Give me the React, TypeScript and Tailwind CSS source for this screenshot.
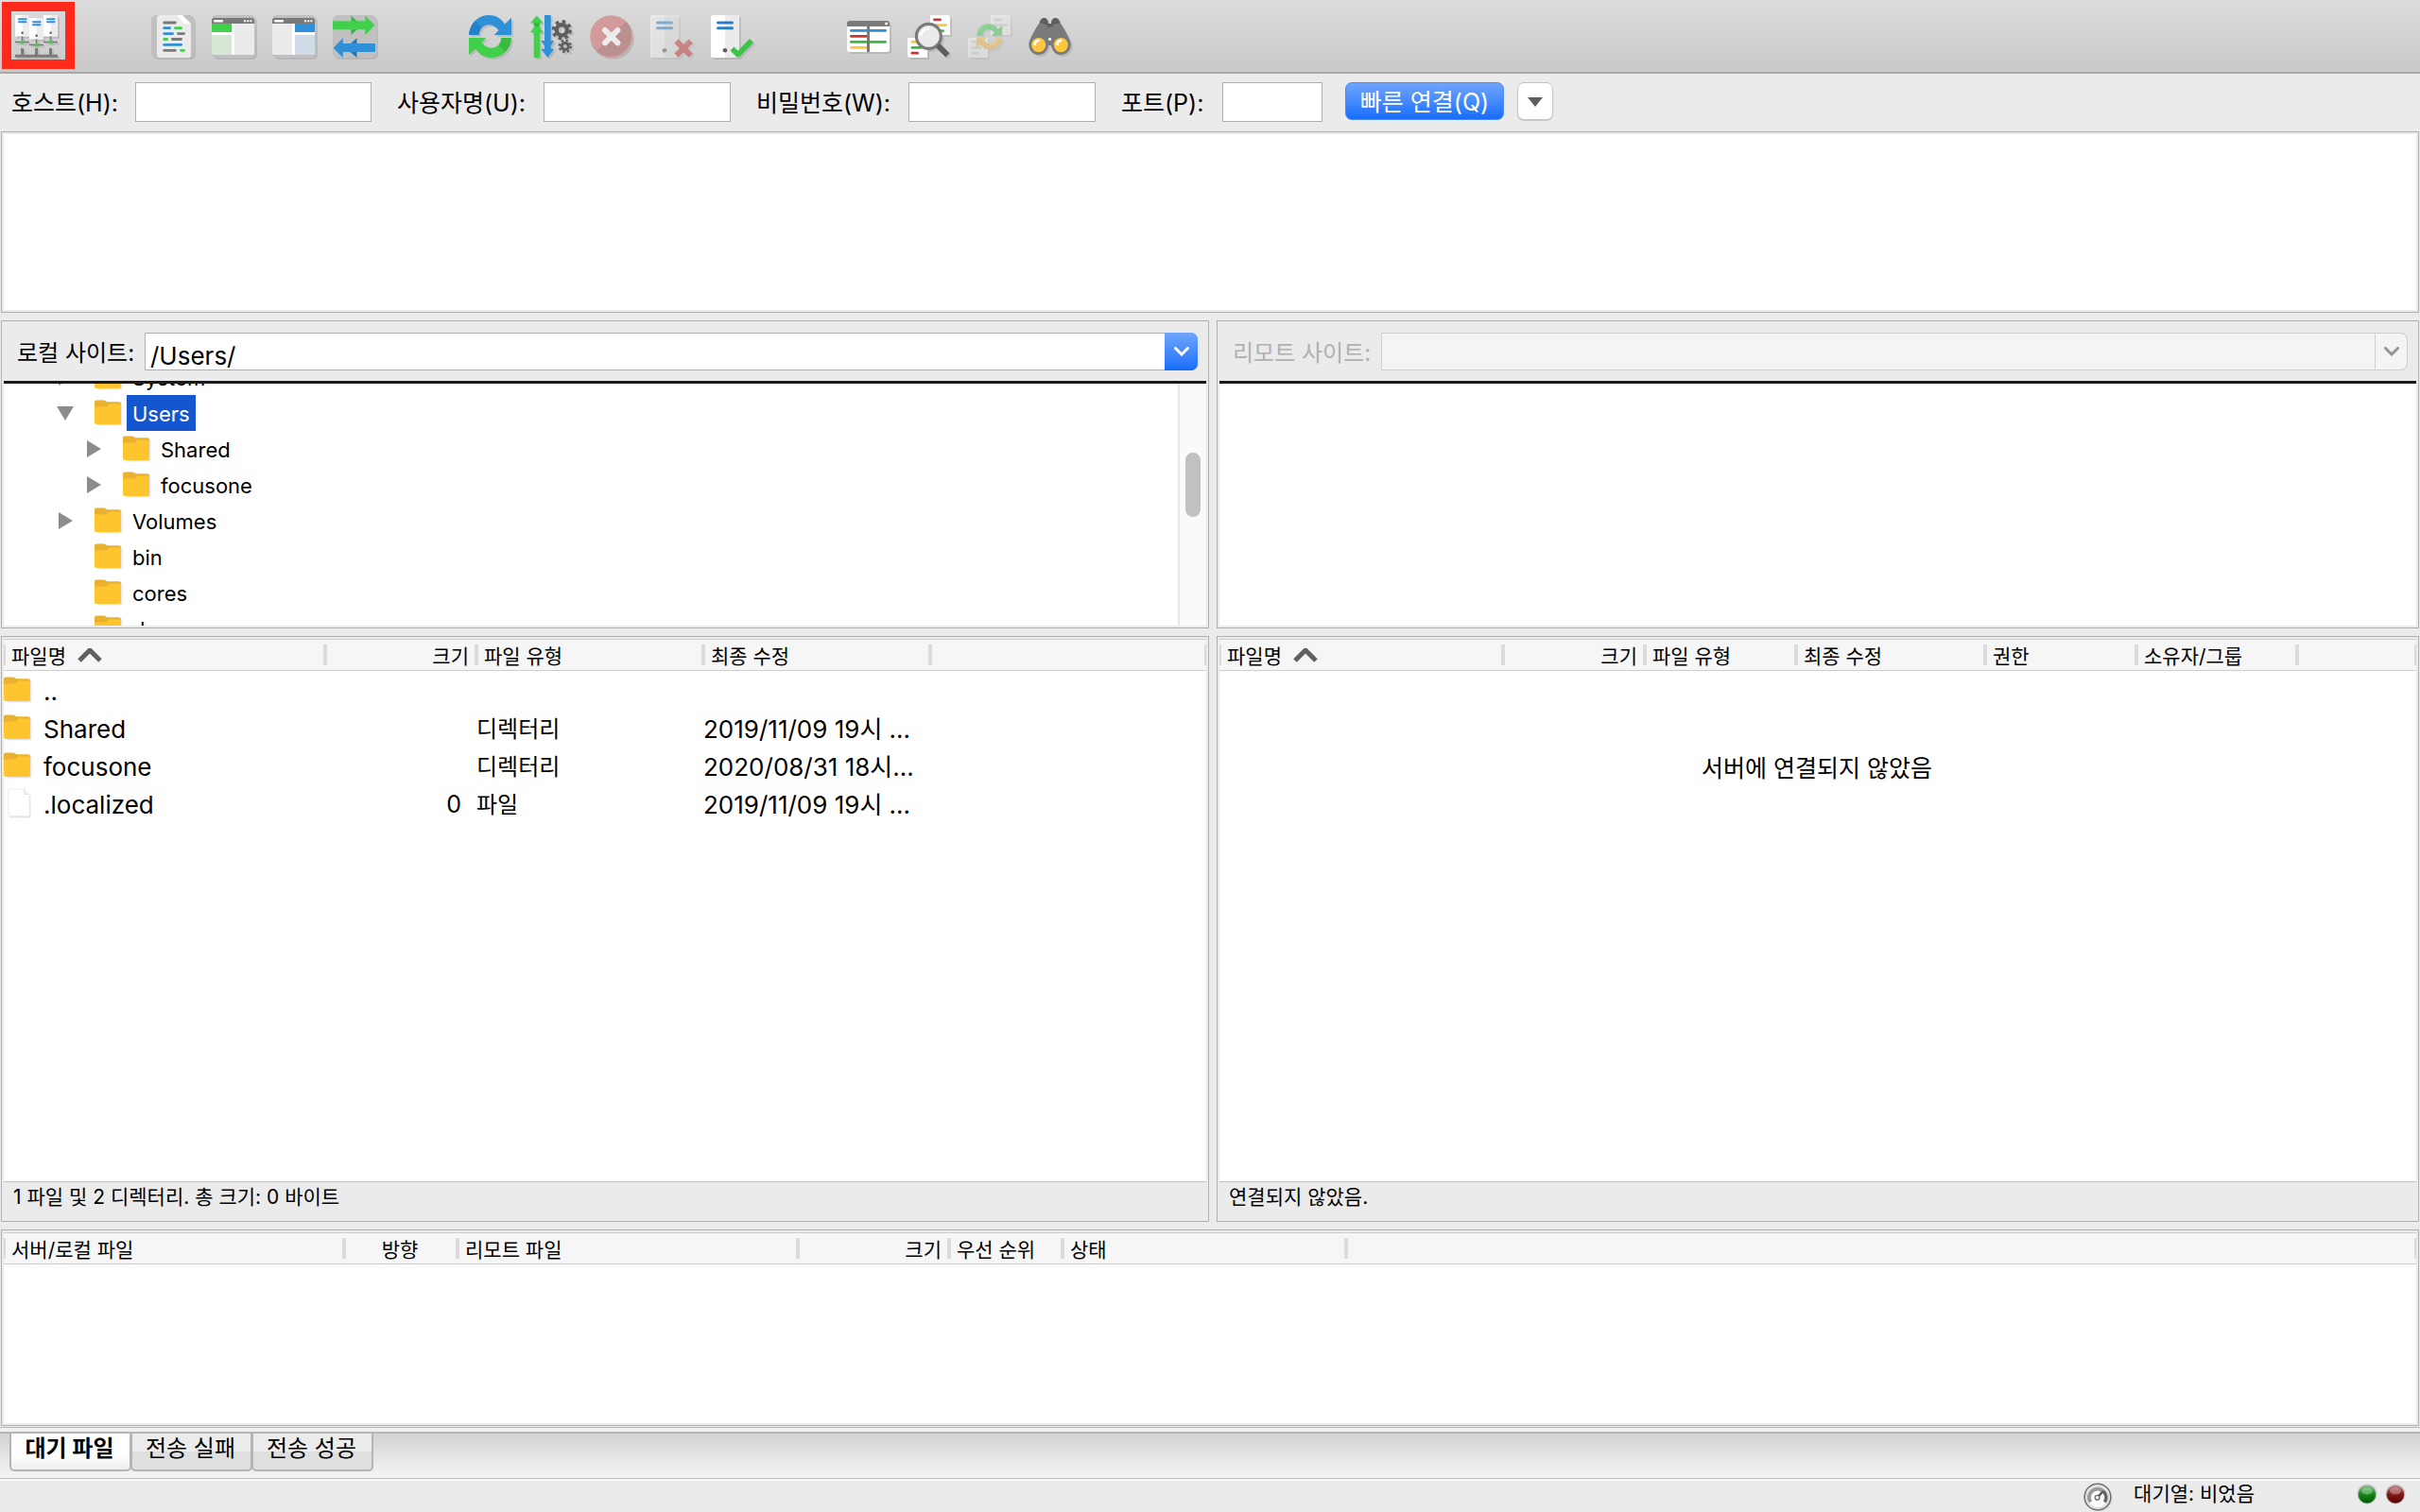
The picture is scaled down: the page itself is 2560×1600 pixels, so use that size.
import { useState } from "react";
import type { ReactNode } from "react";

const BLUE = "#2f90d8";
const GREEN = "#41d04c";
const GRAY = "#7a7a7a";
const RED = "#cb3436";
const YELLOW = "#fec63d";

type Line = [x1: number, x2: number, y: number, color: string];

function Lines({ items, width = 2.8 }: { items: Line[]; width?: number }) {
  return (
    <g strokeWidth={width} strokeLinecap="round">
      {items.map(([x1, x2, y, color], i) => (
        <path key={i} d={`M${x1 + width / 2} ${y}H${x2 - width / 2}`} stroke={color} />
      ))}
    </g>
  );
}

function Icon({ children }: { children: ReactNode }) {
  return (
    <svg
      viewBox="0 0 48 48"
      className="size-12 overflow-visible drop-shadow-[2px_2px_0_rgba(0,0,0,0.1)]"
      fill="none"
      aria-hidden="true"
    >
      {children}
    </svg>
  );
}

function SiteManagerIcon() {
  const servers = [
    [0, 0],
    [15, 3],
    [30, 0],
  ];
  return (
    <Icon>
      {servers.map(([x, y]) => (
        <g key={x} transform={`translate(${x} ${y})`}>
          <path d="M0 0H15V22.5H0Z" fill="#fff" />
          <path d="M7.5 0H15V22.5H7.5Z" fill="#ececec" />
          <Lines width={2} items={[[3, 12.5, 4.3, BLUE], [3, 12.5, 7.3, BLUE]]} />
          <circle cx="7.6" cy="18.8" r="1.2" fill="#555" />
          <path d="M7.6 22.5V28.4M0 28.4H15" stroke="#777" strokeWidth="1.5" />
          <circle cx="7.6" cy="28.4" r="2" fill={GREEN} />
        </g>
      ))}
      <path d="M7.6 35V43M22.5 35V43M37.5 35V43M0 43.3H45" stroke={GRAY} strokeWidth="3" />
    </Icon>
  );
}

function LogIcon() {
  return (
    <Icon>
      <rect width="45" height="45" rx="5" fill="#c0c0c0" />
      <path d="M9 0H33L42 9V42a3 3 0 0 1-3 3H9a3 3 0 0 1-3-3V3a3 3 0 0 1 3-3Z" fill="#ebebeb" />
      <path d="M33 0H40a5 5 0 0 1 5 5V12H42V9Z" fill="#c0c0c0" />
      <path d="M27 0L33 0L42 9H35a2 2 0 0 1-2-2Z" fill="#fff" />
      <Lines
        items={[
          [12.3, 26.7, 8, GRAY],
          [12.3, 21, 13.7, BLUE],
          [24, 33, 13.7, GREEN],
          [12.3, 24, 19.6, BLUE],
          [27, 36, 19.6, GRAY],
          [12.3, 18, 25.5, GREEN],
          [21, 33, 25.5, GRAY],
          [12.3, 33, 31.3, BLUE],
          [12.3, 26.7, 37.3, GRAY],
          [30, 36, 37.3, GREEN],
        ]}
      />
    </Icon>
  );
}

function LocalPaneIcon() {
  return (
    <Icon>
      <rect width="46" height="45" rx="5" fill="#c0c0c0" />
      <path d="M0 9H45V39a3 3 0 0 1-3 3H3a3 3 0 0 1-3-3Z" fill="#fff" />
      <path d="M0 9V6a3 3 0 0 1 3-3H42a3 3 0 0 1 3 3V9Z" fill={GRAY} />
      <path d="M0 9H21V18H0Z" fill={GREEN} />
      <path d="M0 21H21V42H3a3 3 0 0 1-3-3Z" fill="#d5e8d6" />
      <path d="M24 9H45V39a3 3 0 0 1-3 3H24Z" fill="#ebebeb" />
      <Lines width={2.4} items={[[2, 12, 6.3, "#fff"]]} />
      <path d="M34 6.3h2M37.2 6.3h2M40.4 6.3h2" stroke="#fff" strokeWidth="2" />
    </Icon>
  );
}

function RemotePaneIcon() {
  return (
    <Icon>
      <rect width="46" height="45" rx="5" fill="#c0c0c0" />
      <path d="M0 9H45V39a3 3 0 0 1-3 3H3a3 3 0 0 1-3-3Z" fill="#fff" />
      <path d="M0 9V6a3 3 0 0 1 3-3H42a3 3 0 0 1 3 3V9Z" fill={GRAY} />
      <path d="M24 9H45V18H24Z" fill={BLUE} />
      <path d="M24 21H45V39a3 3 0 0 1-3 3H24Z" fill="#cfdce7" />
      <path d="M0 9H21V42H3a3 3 0 0 1-3-3Z" fill="#ebebeb" />
      <Lines width={2.4} items={[[2, 12, 6.3, "#fff"]]} />
      <path d="M34 6.3h2M37.2 6.3h2M40.4 6.3h2" stroke="#fff" strokeWidth="2" />
    </Icon>
  );
}

function QueueIcon() {
  return (
    <Icon>
      <rect width="46" height="45" rx="5" fill="#c0c0c0" />
      <path d="M19.5 .6L26 7V15L19.5 21Z" fill="#34b440" />
      <path d="M0 6.3H34.3V.6L44.6 10.7L34.3 21V15.3H0Z" fill={GREEN} />
      <path d="M25.5 24.2L19 30V39.5L25.5 45Z" fill="#2378ba" />
      <path d="M45 30H10.8V24.2L.6 34.7L10.8 45V39H45Z" fill={BLUE} />
    </Icon>
  );
}

const REFRESH_ARROW =
  "M.2 21C.5 9 9.5 0 21 0C28 0 34 3 38 9.5L45 2.7V21H26.7L31.5 16C28.5 12 24.5 10 20.5 10.3C15 10.7 11.2 15 10.7 21Z";
const REFRESH_SHADE = "M.2 21C.3 15 3 9.5 6.8 6L13.2 13.2C11.6 15.2 10.8 18 10.7 21Z";

function RefreshIcon() {
  return (
    <Icon>
      <path d={REFRESH_ARROW} fill={BLUE} />
      <path d={REFRESH_SHADE} fill="#2680c6" />
      <g transform="rotate(180 22.5 22.5)">
        <path d={REFRESH_ARROW} fill={GREEN} />
        <path d={REFRESH_SHADE} fill="#38bb43" />
      </g>
    </Icon>
  );
}

function ProcessIcon() {
  return (
    <Icon>
      <path d="M7.8 .6L14.7 8.4H11V13L14.7 18.4H11V45H4.7V18.4H1L4.7 13V8.4H1Z" fill={GREEN} />
      <path d="M4.7 8.4H11V10L7.8 12.5L4.7 10Z" fill="#34b440" />
      <path d="M16 0H22.7V27H26.3L22.7 32.5V35.7H26.3L19.3 45L12.3 35.7H16V32.5L12.3 27H16Z" fill={BLUE} />
      <g stroke="#5e5e5e">
        <circle cx="34.3" cy="15.8" r="5.6" strokeWidth="4.4" />
        <circle cx="34.3" cy="15.8" r="9" strokeWidth="3.4" strokeDasharray="3.6 3.47" />
        <circle cx="37.8" cy="33" r="3.6" strokeWidth="3" />
        <circle cx="37.8" cy="33" r="6" strokeWidth="2.4" strokeDasharray="2.4 2.31" />
      </g>
    </Icon>
  );
}

function CancelIcon() {
  return (
    <Icon>
      <circle cx="22.6" cy="22.6" r="22.4" fill="#d29a9a" />
      <path d="M38.4 6.8A22.4 22.4 0 0 1 6.8 38.4Z" fill="#bd9090" />
      <path d="M16 16L29.4 29.4M29.4 16L16 29.4" stroke="#ececec" strokeWidth="6" strokeLinecap="round" />
    </Icon>
  );
}

function Tower() {
  return (
    <>
      <path d="M2 0H28a2 2 0 0 1 2 2V43a2 2 0 0 1-2 2H2a2 2 0 0 1-2-2V2a2 2 0 0 1 2-2Z" fill="#fff" />
      <path d="M15 0H28a2 2 0 0 1 2 2V43a2 2 0 0 1-2 2H15Z" fill="#ebebeb" />
      <Lines width={3} items={[[6, 24, 8, "#2a80c4"], [6, 24, 13.8, "#2a80c4"]]} />
      <circle cx="15" cy="37.2" r="2.3" fill="#5e5e5e" />
    </>
  );
}

function DisconnectIcon() {
  return (
    <Icon>
      <g opacity="0.45">
        <Tower />
        <path d="M27.5 27.5L42.8 42.6M42.8 27.5L27.5 42.6" stroke={RED} strokeWidth="6" />
      </g>
    </Icon>
  );
}

function ReconnectIcon() {
  return (
    <Icon>
      <Tower />
      <path d="M22.5 35.5L28.7 41.8L43 27" stroke="#3bc347" strokeWidth="5.6" strokeLinejoin="round" />
    </Icon>
  );
}

function FilterIcon() {
  return (
    <Icon>
      <path d="M0 12H45V36a3 3 0 0 1-3 3H3a3 3 0 0 1-3-3Z" fill="#fff" />
      <path d="M0 12V9a3 3 0 0 1 3-3H42a3 3 0 0 1 3 3V12Z" fill={GRAY} />
      <Lines
        items={[
          [3, 42, 16.4, BLUE],
          [3, 22, 22.3, RED],
          [3, 42, 28.4, "#38bb43"],
          [3, 22, 34.3, YELLOW],
        ]}
      />
      <path d="M22.5 12V39" stroke={GRAY} strokeWidth="3" />
      <circle cx="41.6" cy="9" r="1.5" fill="#fff" />
    </Icon>
  );
}

function CompareIcon() {
  return (
    <Icon>
      <path d="M24 0H42a3 3 0 0 1 3 3V21H24Z" fill="#fff" />
      <path d="M0 24H21V45H3a3 3 0 0 1-3-3Z" fill="#fff" />
      <Lines
        items={[
          [27, 36, 4.8, RED],
          [27, 42, 10.6, YELLOW],
          [27, 39, 16.7, "#38bb43"],
          [3.5, 16, 28.4, YELLOW],
          [3.5, 16, 34.3, "#38bb43"],
          [3.5, 12, 40.2, RED],
        ]}
      />
      <circle cx="22.4" cy="22.4" r="13" fill="#ebebeb" stroke={GRAY} strokeWidth="3.2" />
      <path d="M14 21.5A9 9 0 0 1 22 14.5" stroke="#fff" strokeWidth="2.6" strokeLinecap="round" />
      <path d="M32.2 32.2L42.4 42.4" stroke="#5e5e5e" strokeWidth="6" />
    </Icon>
  );
}

function SyncIcon() {
  return (
    <Icon>
      <g opacity="0.5">
        <path d="M24 0H42a3 3 0 0 1 3 3V21H24Z" fill="#f4f4f4" />
        <path d="M0 24H21V45H3a3 3 0 0 1-3-3Z" fill="#f4f4f4" />
        <Lines
          items={[
            [27, 36, 4.8, "#d5d5d5"],
            [27, 42, 10.6, "#d5d5d5"],
            [3.5, 13, 28.4, "#d5d5d5"],
            [3.5, 15, 34.3, "#d5d5d5"],
            [3.5, 12, 40.2, "#d5d5d5"],
          ]}
        />
        <g transform="translate(8.8 9) scale(.61)">
          <path d={REFRESH_ARROW} fill="#4fd25e" />
          <path d={REFRESH_ARROW} fill="#f5c05a" transform="rotate(180 22.5 22.5)" />
        </g>
      </g>
    </Icon>
  );
}

function FindIcon() {
  return (
    <Icon>
      <path d="M11.5 8.5C12 5 14 3 16.5 3S21 5 21 9H24C24 5 26 3 28.5 3S33 5 33.5 8.5L30 14H15Z" fill="#5e5e5e" />
      <path
        d="M11.5 8.5C15 8 19 9.5 20.5 13H24.5C26 9.5 30 8 33.5 8.5C37 13 41 20 44 27.5C46.5 34 42 42 34.5 42C28.5 42 25 38 24 32H21C20 38 16.5 42 10.5 42C3 42-1.5 34 1 27.5C4 20 8 13 11.5 8.5Z"
        fill={GRAY}
      />
      <circle cx="10.7" cy="31.6" r="7.6" fill={YELLOW} />
      <circle cx="34.3" cy="31.6" r="7.6" fill={YELLOW} />
      <path
        d="M6.5 31A4.5 4.5 0 0 1 10.5 27M30.2 31A4.5 4.5 0 0 1 34.2 27"
        stroke="#fff"
        strokeWidth="2.6"
        strokeLinecap="round"
      />
      <circle cx="22.5" cy="25.4" r="1.6" fill="#fff" />
    </Icon>
  );
}

function FolderIcon() {
  return (
    <svg viewBox="0 0 30 28" className="h-7 w-[30px] shrink-0" aria-hidden="true">
      <path d="M2 3.5H28L29.5 5V25.5a2 2 0 0 1-2 2H4Z" fill="#e8e8e8" />
      <path d="M0 2a2 2 0 0 1 2-1.5H10.5L13.5 2.3H26a2 2 0 0 1 2 2V10H0Z" fill="#e8b12f" />
      <path d="M0 7.6H12L16 4.5H26.5a1.5 1.5 0 0 1 1.5 1.5V24a2 2 0 0 1-2 2H2a2 2 0 0 1-2-2Z" fill="#fec52e" />
    </svg>
  );
}

function FileIcon() {
  return (
    <svg viewBox="0 0 30 32" className="h-8 w-[30px] shrink-0" aria-hidden="true">
      <path d="M6 2H22L28.5 8.5V29.5a2 2 0 0 1-2 2H7a2 2 0 0 1-2-2V3a1 1 0 0 1 1-1Z" fill="#e6e6e6" />
      <path
        d="M6 1H21.5L27 7V28a1.5 1.5 0 0 1-1.5 1.5H6.5A1.5 1.5 0 0 1 5 28V2a1 1 0 0 1 1-1Z"
        fill="#fff"
        stroke="#ececec"
      />
      <path d="M21.5 1V6.5H27" fill="#f2f2f2" stroke="#e2e2e2" />
    </svg>
  );
}

const toolGroups = [
  [
    { label: "로그 표시", icon: <LogIcon /> },
    { label: "로컬 트리 표시", icon: <LocalPaneIcon /> },
    { label: "리모트 트리 표시", icon: <RemotePaneIcon /> },
    { label: "전송 대기열 표시", icon: <QueueIcon /> },
  ],
  [
    { label: "새로 고침", icon: <RefreshIcon /> },
    { label: "대기열 처리", icon: <ProcessIcon /> },
    { label: "취소", icon: <CancelIcon />, disabled: true },
    { label: "연결 끊기", icon: <DisconnectIcon />, disabled: true },
    { label: "재연결", icon: <ReconnectIcon /> },
  ],
  [
    { label: "필터", icon: <FilterIcon /> },
    { label: "디렉터리 비교", icon: <CompareIcon /> },
    { label: "동기화 탐색", icon: <SyncIcon />, disabled: true },
    { label: "파일 검색", icon: <FindIcon /> },
  ],
];

function Toolbar() {
  return (
    <div
      role="toolbar"
      className="flex gap-24 border-b-2 border-[#a8a8a8] bg-linear-to-b from-[#dcdcdc] to-[#c9c9c9] px-4 pt-4 pb-3"
    >
      <button type="button" aria-label="사이트 관리자" className="relative">
        <SiteManagerIcon />
        <span className="absolute -top-[14px] -right-[15px] -bottom-[9px] -left-[14px] border-10 border-[#ff2a1c]" />
      </button>
      {toolGroups.map((group, i) => (
        <div key={i} className="flex gap-4">
          {group.map((t) => (
            <button key={t.label} type="button" aria-label={t.label} disabled={"disabled" in t}>
              {t.icon}
            </button>
          ))}
        </div>
      ))}
    </div>
  );
}

const fields = [
  { id: "host", label: "호스트(H):", type: "text", labelWidth: "w-[131px]", width: "w-[250px]" },
  { id: "user", label: "사용자명(U):", type: "text", labelWidth: "w-[155px]", width: "w-[198px]" },
  { id: "pass", label: "비밀번호(W):", type: "password", labelWidth: "w-[161px]", width: "w-[198px]" },
  { id: "port", label: "포트(P):", type: "text", labelWidth: "w-[107px]", width: "w-[106px]" },
];

function QuickConnect() {
  return (
    <form className="flex items-start gap-6 px-3 pt-[9px] pb-[10px]" onSubmit={(e) => e.preventDefault()}>
      <div className="flex gap-[27px]">
        {fields.map((f) => (
          <div key={f.id} className="flex h-[42px] items-center">
            <label htmlFor={f.id} className={`${f.labelWidth} pt-[2px] whitespace-nowrap`}>
              {f.label}
            </label>
            <input
              id={f.id}
              type={f.type}
              className={`${f.width} h-[42px] border border-[#b0b0b0] bg-white px-1 outline-none`}
            />
          </div>
        ))}
      </div>
      <div className="flex gap-[14px]">
        <button
          type="submit"
          className="h-10 w-[168px] rounded-[7px] border border-[#4a8cf5] bg-linear-to-b from-[#6ea5f9] to-[#146cfd] pt-[2px] whitespace-nowrap text-white"
        >
          빠른 연결(Q)
        </button>
        <button
          type="button"
          aria-label="최근 서버"
          className="flex h-10 w-[38px] items-center justify-center rounded-[7px] border border-[#c4c4c4] bg-white pt-[2px] shadow-[0_1px_1px_rgba(0,0,0,0.15)]"
        >
          <svg viewBox="0 0 16 10" className="h-[10px] w-4" aria-hidden="true">
            <path d="M0 0H16L8 10Z" fill="#5e5e5e" />
          </svg>
        </button>
      </div>
    </form>
  );
}

function Panel({ className, children }: { className: string; children?: ReactNode }) {
  return <section className={`flex flex-col border border-[#b0b0b0] ${className}`}>{children}</section>;
}

function SiteSelect({ id, path, disabled }: { id: string; path: string; disabled?: boolean }) {
  return (
    <div className="relative flex flex-1">
      <select
        id={id}
        disabled={disabled}
        className={`h-10 flex-1 appearance-none rounded-r-[7px] border px-[5px] pt-[10px] text-[26px] leading-none opacity-100 outline-none ${
          disabled ? "border-[#d0d0d0] bg-[#f4f4f4]" : "border-[#b0b0b0] bg-white"
        }`}
      >
        <option>{path}</option>
      </select>
      <span
        className={`pointer-events-none absolute inset-y-0 right-0 flex w-[35px] items-center justify-center rounded-r-[7px] ${
          disabled ? "border border-[#d0d0d0] text-[#959595]" : "bg-linear-to-b from-[#6ea5f9] to-[#146cfd] text-white"
        }`}
      >
        <svg viewBox="0 0 16 10" className="h-[10px] w-4" fill="none" aria-hidden="true">
          <path d="M1.5 1.5L8 8L14.5 1.5" stroke="currentColor" strokeWidth="3" strokeLinecap="round" />
        </svg>
      </span>
    </div>
  );
}

const tree = [
  { name: "System", indent: "pl-[56px]", arrow: "right" },
  { name: "Users", indent: "pl-[56px]", arrow: "down", selected: true },
  { name: "Shared", indent: "pl-[86px]", arrow: "right" },
  { name: "focusone", indent: "pl-[86px]", arrow: "right" },
  { name: "Volumes", indent: "pl-[56px]", arrow: "right" },
  { name: "bin", indent: "pl-[56px]", arrow: "" },
  { name: "cores", indent: "pl-[56px]", arrow: "" },
  { name: "dev", indent: "pl-[56px]", arrow: "" },
];

function LocalTree() {
  return (
    <div className="mx-[2px] mb-[2px] flex flex-1 overflow-hidden border-t-3 border-[#1a1a1a] bg-white">
      {/* list is scrolled past the first rows */}
      <ul role="tree" className="-mt-[26px] h-[282px] flex-1 text-[22px]">
        {tree.map((n) => (
          <li key={n.name} role="treeitem" aria-selected={!!n.selected} className={`flex h-[38px] items-center ${n.indent}`}>
            <svg viewBox="0 0 18 18" className="mr-[22px] size-[18px]" fill="#8c8c8c" aria-hidden="true">
              {n.arrow === "right" && <path d="M2 0L17 9L2 18Z" />}
              {n.arrow === "down" && <path d="M0 2H18L9 17Z" />}
            </svg>
            <FolderIcon />
            <span
              className={`ml-1 flex h-[38px] items-center px-[6px] pt-[2px] ${n.selected ? "bg-[#1456cf] text-white" : ""}`}
            >
              {n.name}
            </span>
          </li>
        ))}
      </ul>
      <div className="flex h-64 w-[30px] justify-center border-l-2 border-l-[#e6e6e6] bg-[#fafafa]">
        <span className="mt-[73px] h-[68px] w-4 rounded-full bg-[#c1c1c1]" />
      </div>
    </div>
  );
}

type Column = { label: string; width?: string; align?: "right" | "center"; sorted?: boolean };

const localColumns: Column[] = [
  { label: "파일명", width: "w-[340px]", sorted: true },
  { label: "크기", width: "w-[160px]", align: "right" },
  { label: "파일 유형", width: "w-[240px]" },
  { label: "최종 수정", width: "w-[240px]" },
  { label: "" },
];

const remoteColumns: Column[] = [
  { label: "파일명", width: "w-[300px]", sorted: true },
  { label: "크기", width: "w-[150px]", align: "right" },
  { label: "파일 유형", width: "w-[160px]" },
  { label: "최종 수정", width: "w-[200px]" },
  { label: "권한", width: "w-[160px]" },
  { label: "소유자/그룹", width: "w-[170px]" },
  { label: "" },
];

const queueColumns: Column[] = [
  { label: "서버/로컬 파일", width: "w-[360px]" },
  { label: "방향", width: "w-[120px]", align: "center" },
  { label: "리모트 파일", width: "w-[360px]" },
  { label: "크기", width: "w-[160px]", align: "right" },
  { label: "우선 순위", width: "w-[120px]" },
  { label: "상태", width: "w-[300px]" },
  { label: "" },
];

function ListTable({ columns, children }: { columns: Column[]; children?: ReactNode }) {
  return (
    <table className="w-full table-fixed border-collapse">
      <thead className="bg-[#f6f6f6] text-[21px]">
        <tr>
          {columns.map((c, i) => (
            <th key={i} className={`border-y border-[#cdcdcd] p-0 text-left font-normal ${c.width ?? ""}`}>
              <div className="flex h-8 items-center">
                {i === 0 && <span className="h-[22px] w-[2px] bg-[#dcdcdc]" />}
                <span
                  className={`flex flex-1 items-center gap-3 pt-[2px] whitespace-nowrap ${i === 0 ? "pl-[6px]" : "pl-2"} ${
                    c.align === "right" ? "justify-end pr-[6px]" : ""
                  } ${c.align === "center" ? "justify-center pr-2" : ""}`}
                >
                  {c.label}
                  {c.sorted && (
                    <svg viewBox="0 0 26 16" className="h-4 w-[26px]" fill="none" aria-label="오름차순">
                      <path d="M2 13L13 2L24 13" stroke="#606060" strokeWidth="5" />
                    </svg>
                  )}
                </span>
                <span
                  className={`h-[22px] bg-[#dcdcdc] ${i === columns.length - 1 ? "w-[2px]" : "relative -mr-[2px] w-1"}`}
                />
              </div>
            </th>
          ))}
        </tr>
      </thead>
      <tbody>{children}</tbody>
    </table>
  );
}

const files = [
  { name: "..", size: "", type: "", modified: "", folder: true },
  { name: "Shared", size: "", type: "디렉터리", modified: "2019/11/09 19시 ...", folder: true },
  { name: "focusone", size: "", type: "디렉터리", modified: "2020/08/31 18시...", folder: true },
  { name: ".localized", size: "0", type: "파일", modified: "2019/11/09 19시 ...", folder: false },
];

function StatusLine({ children }: { children: ReactNode }) {
  return (
    <p className="mx-[2px] h-[42px] border-t border-[#bdbdbd] px-[10px] text-[21px] leading-8">{children}</p>
  );
}

const tabs = ["대기 파일", "전송 실패", "전송 성공"];

function QueueTabs() {
  const [active, setActive] = useState(0);
  return (
    <div className="mt-px border-t border-[#b8b8b8]">
      <div className="h-[6px] border-b-2 border-[#b5b5b5] bg-[#f0f0f0]" />
      <div
        role="tablist"
        className="flex h-[48px] items-start border-b border-[#bdbdbd] bg-linear-to-b from-[#d3d3d3] to-[#f5f5f5] pl-[10px]"
      >
        {tabs.map((t, i) => (
          <button
            key={t}
            type="button"
            role="tab"
            aria-selected={i === active}
            onClick={() => setActive(i)}
            className={`-mr-px flex h-10 w-[129px] justify-center rounded-b-[5px] border-2 border-t-0 border-[#b5b5b5] pt-px pr-[2px] text-[24px] leading-[30px] whitespace-nowrap ${
              i === active
                ? "bg-linear-to-b from-white from-60% to-[#eeeeee] font-bold"
                : "bg-linear-to-b from-[#ececec] from-50% to-[#dfdfdf] to-50%"
            }`}
          >
            {t}
          </button>
        ))}
      </div>
    </div>
  );
}

function Led({ on }: { on: boolean }) {
  return (
    <svg viewBox="0 0 22 22" className="size-[22px]" aria-hidden="true">
      <defs>
        <linearGradient id={on ? "led-on" : "led-off"} x2="0" y2="1">
          <stop stopColor={on ? "#63b863" : "#b56464"} />
          <stop offset="0.5" stopColor={on ? "#148414" : "#831717"} />
          <stop offset="1" stopColor={on ? "#005c00" : "#5c0000"} />
        </linearGradient>
      </defs>
      <circle cx="11" cy="11" r="10.5" fill="#bfbfbf" />
      <circle cx="11" cy="11.5" r="9.2" fill={`url(#${on ? "led-on" : "led-off"})`} />
      <ellipse cx="11" cy="7.5" rx="6" ry="4" fill="#fff" opacity="0.3" />
    </svg>
  );
}

function StatusBar() {
  return (
    <footer className="flex h-[35px] items-center border-t-2 border-[#f7f7f7] pr-[15px] text-[21px]">
      <svg viewBox="0 0 32 32" className="ml-auto size-8" fill="none" aria-label="속도 제한">
        <circle cx="18" cy="18" r="13.5" fill="#d8d8d8" />
        <circle cx="16" cy="16" r="13.8" fill="#fff" stroke="#6d6d6d" strokeWidth="1.6" />
        <circle cx="16" cy="16" r="11.8" stroke="#c8c8c8" />
        <path d="M8.5 21.5A9 9 0 1 1 23.5 21.5" stroke="#9a9a9a" strokeWidth="4" />
        <path d="M16 16L22 10M22 10A9 9 0 0 1 23.5 21.5" stroke="#5f5f5f" strokeWidth="2.5" />
        <circle cx="15.6" cy="16.8" r="2.4" fill="#fff" stroke="#707070" strokeWidth="1.4" />
      </svg>
      <span className="ml-[22px] pb-[6px]">대기열: 비었음</span>
      <div className="ml-[108px] flex gap-2 pb-[6px]">
        <Led on />
        <Led on={false} />
      </div>
    </footer>
  );
}

export default function App() {
  return (
    <div className="flex min-h-screen flex-col bg-[#ebebeb] font-['Inter','Noto_Sans_CJK_KR',sans-serif] text-[25px] leading-none text-black">
      <Toolbar />
      <QuickConnect />
      <main className="flex flex-1 flex-col gap-2 px-px">
        <Panel className="h-48 p-[2px]">
          <div role="log" className="flex-1 bg-white" />
        </Panel>

        <div className="grid flex-1 grid-cols-[1278fr_1272fr] grid-rows-[326px_1fr] gap-2">
          <Panel className="min-w-0">
            <div className="flex h-[63px] items-center pr-[11px] pl-4">
              <label htmlFor="local-site" className="w-[135px] pt-[5px] text-[24px] whitespace-nowrap">
                로컬 사이트:
              </label>
              <SiteSelect id="local-site" path="/Users/" />
            </div>
            <LocalTree />
          </Panel>

          <Panel className="min-w-0">
            <div className="flex h-[63px] items-center pr-[11px] pl-4 text-[#b0b0b0]">
              <label htmlFor="remote-site" className="w-[157px] pt-[5px] text-[24px] whitespace-nowrap">
                리모트 사이트:
              </label>
              <SiteSelect id="remote-site" path="" disabled />
            </div>
            <div className="mx-[2px] mb-[2px] flex-1 border-t-3 border-[#1a1a1a] bg-white" />
          </Panel>

          <Panel className="min-w-0">
            <div className="mx-[2px] mt-[2px] flex-1 bg-white">
              <ListTable columns={localColumns}>
                {files.map((f) => (
                  <tr key={f.name} className="h-10 whitespace-nowrap">
                    <td className="p-0">
                      <div className="flex items-center gap-3 text-[26px]">
                        {f.folder ? <FolderIcon /> : <FileIcon />}
                        <span className="pt-1">{f.name}</span>
                      </div>
                    </td>
                    <td className="p-0 pt-1 pr-4 text-right">{f.size}</td>
                    <td className="p-0 pt-1 text-[24px]">{f.type}</td>
                    <td className="p-0 pt-1 text-[26px]">{f.modified}</td>
                    <td />
                  </tr>
                ))}
              </ListTable>
            </div>
            <StatusLine>1 파일 및 2 디렉터리. 총 크기: 0 바이트</StatusLine>
          </Panel>

          <Panel className="min-w-0">
            <div className="mx-[2px] mt-[2px] flex-1 bg-white">
              <ListTable columns={remoteColumns}>
                <tr>
                  <td colSpan={7} className="pt-[91px] pr-[2px] text-center">
                    서버에 연결되지 않았음
                  </td>
                </tr>
              </ListTable>
            </div>
            <StatusLine>연결되지 않았음.</StatusLine>
          </Panel>
        </div>

        <Panel className="h-[208px] p-[2px]">
          <div className="flex-1 bg-white">
            <ListTable columns={queueColumns} />
          </div>
        </Panel>
      </main>
      <QueueTabs />
      <StatusBar />
    </div>
  );
}
